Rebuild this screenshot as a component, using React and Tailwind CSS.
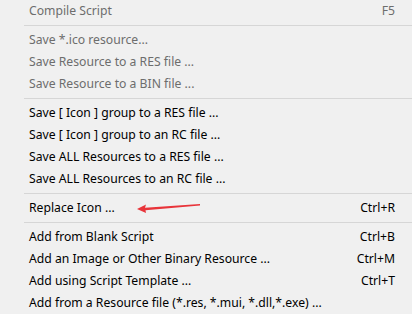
const groups = [
  [{ label: "Compile Script", key: "F5", disabled: true }],
  [
    { label: "Save *.ico resource...", disabled: true },
    { label: "Save Resource to a RES file ...", disabled: true },
    { label: "Save Resource to a BIN file ...", disabled: true },
  ],
  [
    { label: "Save [ Icon ] group to a RES file ..." },
    { label: "Save [ Icon ] group to an RC file ..." },
    { label: "Save ALL Resources to a RES file ..." },
    { label: "Save ALL Resources to an RC file ..." },
  ],
  [{ label: "Replace Icon ...", key: "Ctrl+R", arrow: true }],
  [
    { label: "Add from Blank Script", key: "Ctrl+B" },
    { label: "Add an Image or Other Binary Resource ...", key: "Ctrl+M" },
    { label: "Add using Script Template ...", key: "Ctrl+T" },
    { label: "Add from a Resource file (*.res, *.mui, *.dll,*.exe) ..." },
  ],
];

function Arrow() {
  return (
    <svg width="66" height="10" viewBox="0 0 66 10" className="absolute left-[136px] top-[6px]">
      <path d="M1 6 L10 1.5 L9 4.8 L64 1 L64 2.4 L9.5 7.2 L10 10 Z" fill="#e8343a" />
    </svg>
  );
}

function Row({ item }) {
  return (
    <div
      className={`relative flex h-[22px] items-center pl-[29px] pr-[17px] ${
        item.disabled ? "text-[#6d6d6d]" : "text-[#000]"
      }`}
    >
      <span className="flex-1 whitespace-nowrap">{item.label}</span>
      {item.key && <span className="whitespace-nowrap">{item.key}</span>}
      {item.arrow && <Arrow />}
    </div>
  );
}

export default function App() {
  return (
    <div
      className="h-[314px] w-[412px] overflow-hidden bg-[#f0f0f0] text-[12.2px]"
      style={{ fontFamily: '"Noto Sans", "Open Sans", sans-serif' }}
    >
      {groups.map((group, gi) => (
        <div key={gi}>
          {gi > 0 && (
            <div className="py-[3px] pl-6">
              <div className="h-px bg-[#d6d6d6]" />
            </div>
          )}
          {group.map((item) => (
            <Row key={item.label} item={item} />
          ))}
        </div>
      ))}
    </div>
  );
}
